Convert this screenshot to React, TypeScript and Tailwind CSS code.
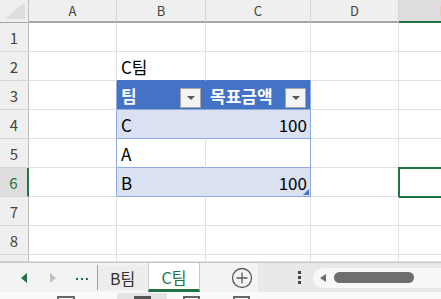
import React from 'react';

const FONT = "font-['Noto_Sans_CJK_KR','Noto_Sans',sans-serif]";
const COLS = ['A', 'B', 'C', 'D', 'E'];
const ROWS = [1, 2, 3, 4, 5, 6, 7, 8, 9];

const BLUE = 'bg-[#4472c4]';
const BAND = 'bg-[#d9e1f2]';

function FilterBtn() {
  return (
    <span className="ml-auto mb-px flex h-[20px] w-[21px] items-center justify-center self-end border border-[#a6a6a6] bg-[#f4f4f4]">
      <span className="h-0 w-0 border-x-[4px] border-t-[4px] border-x-transparent border-t-[#595959]" />
    </span>
  );
}

function Cell({ r, c }: { r: number; c: string }) {
  const inTable = r >= 3 && r <= 6;
  const banded = r === 4 || r === 6;
  let cls = 'relative flex items-center border-r border-b border-[#e1e1e1] px-1 text-[17px] leading-none text-black';
  let content: React.ReactNode = null;

  if (c === 'A' && inTable) cls += ' border-r-[#8ea9db]';
  if ((c === 'B' || c === 'C') && r === 2) cls += ' border-b-[#4472c4]';
  if ((c === 'B' || c === 'C') && inTable) {
    cls += ' border-b-[#8ea9db]';
    if (r === 3) cls += ` ${BLUE} font-bold text-white`;
    if (banded) cls += ` ${BAND}`;
    if (c === 'C') cls += ' border-r-[#8ea9db]';
    if (c === 'B' && r === 3) cls += ' border-r-[#4472c4]';
    if (c === 'B' && banded) cls += ' border-r-[#d9e1f2]';
  }

  if (c === 'B' && r === 2) content = 'C팀';
  if (r === 3 && c === 'B') content = (<><span className="self-center">팀</span><FilterBtn /></>);
  if (r === 3 && c === 'C') content = (<><span className="self-center">목표금액</span><FilterBtn /></>);
  if (c === 'B' && r === 4) content = 'C';
  if (c === 'B' && r === 5) content = 'A';
  if (c === 'B' && r === 6) content = 'B';
  if (c === 'C' && (r === 4 || r === 6)) {
    cls += ' justify-end pr-[3px]';
    content = '100';
  }

  return (
    <div className={cls}>
      {content}
      {c === 'C' && r === 6 && (
        <span className="absolute bottom-[1px] right-[1px] h-0 w-0 border-b-[6px] border-l-[6px] border-l-transparent border-b-[#4472c4]" />
      )}
      {c === 'E' && r === 6 && (
        <span className="absolute -left-px -top-px h-[31px] w-[calc(100%+2px)] border-2 border-[#217346]" />
      )}
    </div>
  );
}

function SheetGrid() {
  return (
    <div className="grid h-[262px] grid-cols-[29px_88px_89px_105px_88px_90px] grid-rows-[23px_repeat(8,29px)_7px]">
      {/* corner */}
      <div className="relative border-r border-b border-r-[#bdbdbd] border-b-[#a6a6a6] bg-[#efefef]">
        <span className="absolute bottom-[3px] right-[3px] h-0 w-0 border-b-[17px] border-l-[20px] border-l-transparent border-b-[#dedede]" />
      </div>
      {COLS.map((c) => (
        <div
          key={c}
          className={`flex items-center justify-center border-r border-b-2 border-r-[#d4d4d4] text-[13px] ${
            c === 'E' ? 'bg-[#dedede] border-b-[#217346] text-[#217346]' : 'bg-[#efefef] border-b-[#a6a6a6] text-[#444]'
          }`}
        >
          {c}
        </div>
      ))}
      {ROWS.map((r) => (
        <React.Fragment key={r}>
          <div
            className={`flex items-center justify-center border-b border-b-[#d4d4d4] text-[15px] leading-none ${
              r === 6 ? 'border-r-2 border-r-[#217346] bg-[#dedede] text-[#217346]' : 'border-r border-r-[#bdbdbd] bg-[#efefef] text-[#444]'
            }`}
          >
            {r < 9 ? r : ''}
          </div>
          {COLS.map((c) => (
            <Cell key={c} r={r} c={c} />
          ))}
        </React.Fragment>
      ))}
    </div>
  );
}

function TabBar() {
  return (
    <div className="flex h-[30px] border-t border-[#c6c6c6] bg-[#f3f3f3]">
      <div className="flex w-[97px] items-center">
        <span className="ml-[21px] h-0 w-0 border-y-[5px] border-r-[6px] border-y-transparent border-r-[#217346]" />
        <span className="ml-[23px] h-0 w-0 border-y-[5px] border-l-[6px] border-y-transparent border-l-[#c2c2c2]" />
        <span className="ml-[20px] mt-[3px] flex gap-[3px]">
          <span className="h-[2px] w-[2px] bg-[#217346]" />
          <span className="h-[2px] w-[2px] bg-[#217346]" />
          <span className="h-[2px] w-[2px] bg-[#217346]" />
        </span>
      </div>
      <div className="mt-[2px] mb-[2px] flex w-[50px] items-center justify-center border-l border-[#9e9e9e] bg-[#ededed] text-[16px] text-[#333]">
        B팀
      </div>
      <div className="ml-[1px] flex w-[52px] items-center justify-center border-x border-b-[3px] border-x-[#c8c8c8] border-b-[#217346] bg-white pt-[2px] text-[16px] text-[#217346]">
        C팀
      </div>
      <div className="flex w-[58px] items-center justify-end pr-[5px]">
        <svg width="22" height="22" viewBox="0 0 22 22" fill="none" stroke="#5a5a5a" strokeWidth="1.3">
          <circle cx="11" cy="11" r="9.5" />
          <path d="M11 5.5v11M5.5 11h11" />
        </svg>
      </div>
      <div className="flex flex-1 items-center bg-[#e9e9e9]">
        <span className="ml-[40px] flex flex-col gap-[2px]">
          <span className="h-[3px] w-[3px] bg-[#444]" />
          <span className="h-[3px] w-[3px] bg-[#444]" />
          <span className="h-[3px] w-[3px] bg-[#444]" />
        </span>
        <div className="ml-[12px] flex h-[20px] flex-1 items-center rounded-l-full bg-[#f8f8f8]">
          <span className="ml-[7px] h-0 w-0 border-y-[4px] border-r-[6px] border-y-transparent border-r-[#6b6b6b]" />
          <span className="ml-[8px] h-[11px] w-[80px] rounded-full bg-[#6e6e6e]" />
        </div>
      </div>
    </div>
  );
}

function StatusBar() {
  return (
    <div className="flex h-[7px] bg-[#fafafa]">
      <span className="ml-[57px] mt-[4px] h-[3px] w-[18px] border-x-2 border-t-2 border-[#666]" />
      <span className="ml-[42px] mt-[1px] flex w-[50px] justify-center bg-[#e3e3e3]">
        <span className="mt-[3px] h-[3px] w-[17px] bg-[#555]" />
      </span>
      <span className="ml-[16px] mt-[4px] h-[3px] w-[17px] border-x-2 border-t-2 border-[#666]" />
      <span className="ml-[33px] mt-[4px] h-[3px] w-[17px] border-x-2 border-t-2 border-[#666]" />
    </div>
  );
}

export default function App() {
  return (
    <div className={`h-[299px] w-[441px] overflow-hidden bg-white ${FONT}`}>
      <SheetGrid />
      <TabBar />
      <StatusBar />
    </div>
  );
}
